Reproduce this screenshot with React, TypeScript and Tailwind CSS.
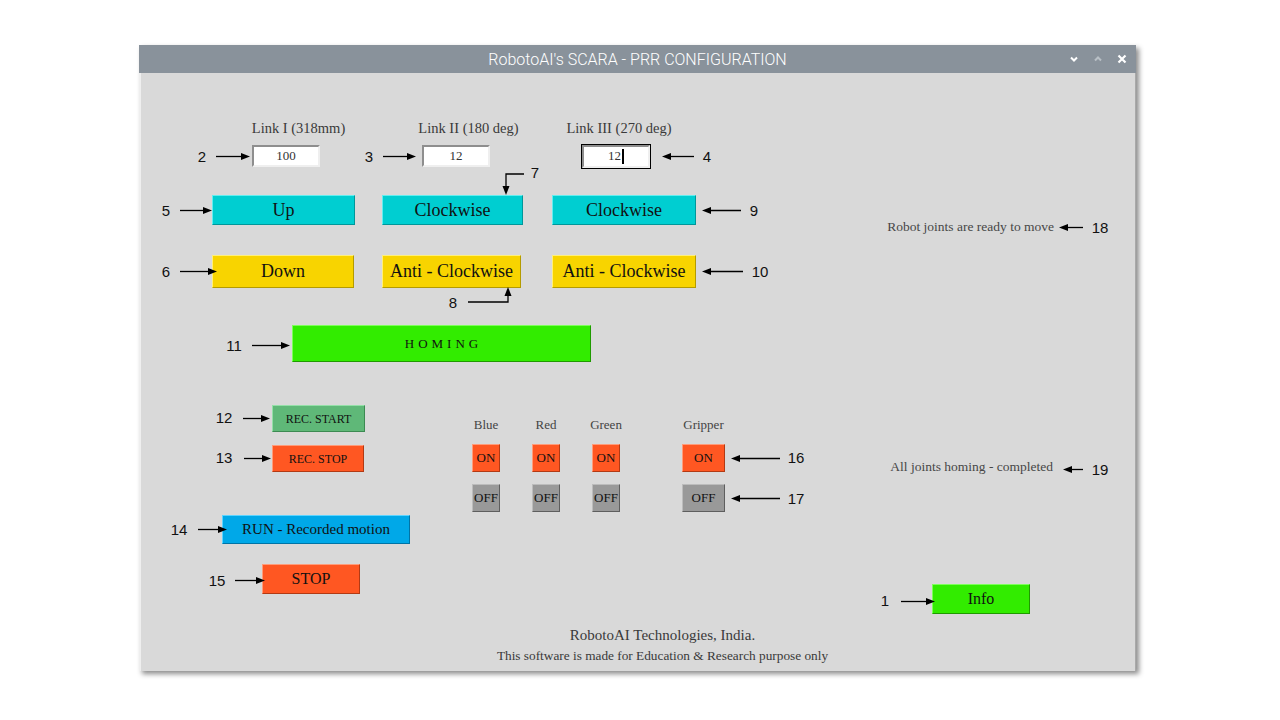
import React from "react";

const serif = "font-['Liberation_Serif','Times_New_Roman',serif]";
const sans = "font-['Liberation_Sans',Arial,sans-serif]";

// Tk style raised buttons
const cyanBtn = `flex items-center justify-center border border-t-[#62eef0] border-l-[#62eef0] border-r-[#00979a] border-b-[#00979a] bg-[#00ced1] text-[18px] text-[#111] ${serif}`;
const yellowBtn = `flex items-center justify-center border border-t-[#fff07a] border-l-[#fff07a] border-r-[#b49b00] border-b-[#b49b00] bg-[#f8d400] text-[18px] text-[#111] ${serif}`;
const greenBtn = `flex items-center justify-center border border-t-[#7dff5a] border-l-[#7dff5a] border-r-[#1f9a00] border-b-[#1f9a00] bg-[#32ec00] text-[#111] ${serif}`;
const orangeBtn = `flex items-center justify-center border border-t-[#ff9c7a] border-l-[#ff9c7a] border-r-[#b23a14] border-b-[#b23a14] bg-[#ff5722] text-[#111] ${serif}`;
const grayBtn = `flex items-center justify-center border border-t-[#bcbcbc] border-l-[#bcbcbc] border-r-[#5e5e5e] border-b-[#5e5e5e] bg-[#999999] text-[#111] ${serif}`;

function Arrow({ w, dir = "right", className = "" }: { w: number; dir?: "right" | "left"; className?: string }) {
  return (
    <svg width={w} height={9} viewBox={`0 0 ${w} 9`} className={`shrink-0 ${className}`}>
      {dir === "right" ? (
        <>
          <line x1={0} y1={4.5} x2={w - 6} y2={4.5} stroke="#000" strokeWidth={1.3} />
          <polygon points={`${w - 9},1 ${w},4.5 ${w - 9},8`} fill="#000" />
        </>
      ) : (
        <>
          <line x1={6} y1={4.5} x2={w} y2={4.5} stroke="#000" strokeWidth={1.3} />
          <polygon points={`9,1 0,4.5 9,8`} fill="#000" />
        </>
      )}
    </svg>
  );
}

function Num({ children, className = "" }: { children: React.ReactNode; className?: string }) {
  return (
    <span className={`flex shrink-0 justify-center whitespace-nowrap text-[15px] leading-none text-[#111] ${sans} ${className}`}>
      {children}
    </span>
  );
}

function TitleBar() {
  return (
    <div className="relative flex h-[28px] items-center justify-center bg-[#89929b]">
      <span className="pt-px font-['Roboto',sans-serif] text-[16px] font-light text-white">RobotoAI's SCARA - PRR CONFIGURATION</span>
      <div className="absolute right-[9px] top-0 flex h-full items-center gap-[14px]">
        <svg width="10" height="10" viewBox="0 0 10 10">
          <path d="M2 3.5 L5 6.5 L8 3.5" stroke="#fff" strokeWidth="2" fill="none" />
        </svg>
        <svg width="10" height="10" viewBox="0 0 10 10">
          <path d="M2 6.5 L5 3.5 L8 6.5" stroke="#b9c0c6" strokeWidth="2" fill="none" />
        </svg>
        <svg width="10" height="10" viewBox="0 0 10 10">
          <path d="M1.5 1.5 L8.5 8.5 M8.5 1.5 L1.5 8.5" stroke="#fff" strokeWidth="2.2" fill="none" />
        </svg>
      </div>
    </div>
  );
}

function LeftPanel() {
  return (
    <div className="flex w-[680px] flex-col">
      {/* link labels */}
      <div className={`mt-[47px] flex h-[17px] items-center text-[14.5px] text-[#3a3a3a] ${serif}`}>
        <span className="ml-[100px] flex w-[119px] justify-center whitespace-nowrap">Link I (318mm)</span>
        <span className="ml-[51px] flex w-[119px] justify-center whitespace-nowrap">Link II (180 deg)</span>
        <span className="ml-[31px] flex w-[120px] justify-center whitespace-nowrap">Link III (270 deg)</span>
      </div>

      {/* entries */}
      <div className={`mt-[8px] flex h-[22px] items-center ${serif}`}>
        <Num className="ml-[53px] w-[20px]">2</Num>
        <Arrow w={34} className="ml-[4px]" />
        <div className="ml-[2px] flex h-[22px] w-[68px] items-center justify-center border-2 border-t-[#8e8e8e] border-l-[#8e8e8e] border-r-[#efefef] border-b-[#efefef] bg-white text-[13px] text-[#333]">
          100
        </div>
        <Num className="ml-[39px] w-[20px]">3</Num>
        <Arrow w={33} className="ml-[4px]" />
        <div className="ml-[6px] flex h-[22px] w-[68px] items-center justify-center border-2 border-t-[#8e8e8e] border-l-[#8e8e8e] border-r-[#efefef] border-b-[#efefef] bg-white text-[13px] text-[#333]">
          12
        </div>
        <div className="ml-[91px] h-[25px] w-[70px] border border-black">
          <div className="flex h-full w-full items-center justify-center border-2 border-t-[#8e8e8e] border-l-[#8e8e8e] border-r-[#efefef] border-b-[#efefef] bg-white text-[13px] text-[#333]">
            <span>12</span>
            <span className="ml-px h-[15px] w-[2px] bg-black" />
          </div>
        </div>
        <Arrow w={32} dir="left" className="ml-[11px]" />
        <Num className="ml-[3px] w-[20px]">4</Num>
      </div>

      {/* up / clockwise */}
      <div className="mt-[28px] flex h-[30px] items-center">
        <Num className="ml-[17px] w-[20px]">5</Num>
        <Arrow w={32} className="ml-[4px]" />
        <button className={`h-[30px] w-[143px] ${cyanBtn}`}>Up</button>
        <button className={`ml-[27px] h-[30px] w-[141px] ${cyanBtn}`}>Clockwise</button>
        <button className={`ml-[29px] h-[30px] w-[144px] ${cyanBtn}`}>Clockwise</button>
        <Arrow w={39} dir="left" className="ml-[6px]" />
        <Num className="ml-[3px] w-[20px]">9</Num>
      </div>

      {/* down / anti-clockwise */}
      <div className="mt-[30px] flex h-[33px] items-center">
        <Num className="ml-[17px] w-[20px]">6</Num>
        <Arrow w={37} className="relative z-10 ml-[4px]" />
        <button className={`ml-[-5px] h-[33px] w-[142px] ${yellowBtn}`}>Down</button>
        <button className={`ml-[28px] h-[33px] w-[139px] ${yellowBtn}`}>Anti - Clockwise</button>
        <button className={`ml-[31px] h-[33px] w-[144px] ${yellowBtn}`}>Anti - Clockwise</button>
        <Arrow w={41} dir="left" className="ml-[6px]" />
        <Num className="ml-[5px] w-[24px]">10</Num>
      </div>

      {/* homing */}
      <div className="mt-[37px] flex h-[37px] items-center">
        <Num className="ml-[83px] w-[24px] pt-[4px]">11</Num>
        <Arrow w={38} className="ml-[6px] mt-[4px]" />
        <button className={`ml-[2px] h-[37px] w-[299px] pl-[4px] text-[13px] tracking-[4px] ${greenBtn}`}>HOMING</button>
      </div>

      {/* recording + toggles */}
      <div className="mt-[43px] flex items-start">
        <div className="flex w-[226px] flex-col">
          <div className="flex h-[27px] items-center">
            <Num className="ml-[73px] w-[24px] pb-[2px]">12</Num>
            <Arrow w={27} className="ml-[7px]" />
            <button className={`ml-[2px] h-[27px] w-[93px] border border-t-[#94e0a8] border-l-[#94e0a8] border-r-[#3c8a52] border-b-[#3c8a52] bg-[#5fb878] text-[12px] text-[#111] ${serif}`}>
              REC. START
            </button>
          </div>
          <div className="mt-[13px] flex h-[27px] items-center">
            <Num className="ml-[73px] w-[24px] pb-[2px]">13</Num>
            <Arrow w={27} className="ml-[8px]" />
            <button className={`ml-[1px] h-[27px] w-[92px] text-[12px] ${orangeBtn}`}>REC. STOP</button>
          </div>
        </div>

        <div className="ml-[107px] flex flex-col">
          <div className={`mt-[13px] flex h-[14px] items-center text-[13px] text-[#444] ${serif}`}>
            <span className="flex w-[28px] justify-center whitespace-nowrap">Blue</span>
            <span className="ml-[32px] flex w-[28px] justify-center whitespace-nowrap">Red</span>
            <span className="ml-[32px] flex w-[28px] justify-center whitespace-nowrap">Green</span>
            <span className="ml-[62px] flex w-[43px] justify-center whitespace-nowrap">Gripper</span>
          </div>
          <div className="mt-[12px] flex h-[28px] items-center">
            <button className={`h-[28px] w-[28px] text-[13px] ${orangeBtn}`}>ON</button>
            <button className={`ml-[32px] h-[28px] w-[28px] text-[13px] ${orangeBtn}`}>ON</button>
            <button className={`ml-[32px] h-[28px] w-[28px] text-[13px] ${orangeBtn}`}>ON</button>
            <button className={`ml-[62px] h-[28px] w-[43px] text-[13px] ${orangeBtn}`}>ON</button>
            <Arrow w={49} dir="left" className="ml-[6px]" />
            <Num className="ml-[4px] w-[24px] pb-[2px]">16</Num>
          </div>
          <div className="mt-[12px] flex h-[28px] items-center">
            <button className={`h-[28px] w-[28px] text-[13px] ${grayBtn}`}>OFF</button>
            <button className={`ml-[32px] h-[28px] w-[28px] text-[13px] ${grayBtn}`}>OFF</button>
            <button className={`ml-[32px] h-[28px] w-[28px] text-[13px] ${grayBtn}`}>OFF</button>
            <button className={`ml-[62px] h-[28px] w-[43px] text-[13px] ${grayBtn}`}>OFF</button>
            <Arrow w={49} dir="left" className="ml-[6px]" />
            <Num className="ml-[4px] w-[24px]">17</Num>
          </div>
        </div>
      </div>

      {/* run recorded */}
      <div className="mt-[3px] flex h-[29px] items-center">
        <Num className="ml-[28px] w-[24px]">14</Num>
        <Arrow w={29} className="relative z-10 ml-[7px]" />
        <button className={`ml-[-5px] h-[29px] w-[188px] border border-t-[#5cd4ff] border-l-[#5cd4ff] border-r-[#0074a6] border-b-[#0074a6] bg-[#00a8e8] text-[15px] text-[#111] ${serif}`}>
          RUN - Recorded motion
        </button>
      </div>

      {/* stop */}
      <div className="mt-[20px] flex h-[30px] items-center">
        <Num className="ml-[66px] w-[24px] pt-[2px]">15</Num>
        <Arrow w={30} className="relative z-10 ml-[6px] mt-[2px]" />
        <button className={`ml-[-3px] h-[30px] w-[98px] text-[16px] ${orangeBtn}`}>STOP</button>
      </div>
    </div>
  );
}

function RightPanel() {
  return (
    <div className="flex flex-1 flex-col">
      <div className={`mt-[146px] flex h-[16px] items-center justify-end pr-[26px]`}>
        <span className={`whitespace-nowrap text-[13.5px] text-[#474747] ${serif}`}>Robot joints are ready to move</span>
        <Arrow w={24} dir="left" className="ml-[5px]" />
        <Num className="ml-[7px] w-[20px]">18</Num>
      </div>
      <div className={`mt-[224px] flex h-[16px] items-center justify-end pr-[26px]`}>
        <span className={`whitespace-nowrap text-[13.5px] text-[#474747] ${serif}`}>All joints homing - completed</span>
        <Arrow w={20} dir="left" className="ml-[10px] mt-[4px]" />
        <Num className="ml-[7px] w-[20px] pt-[5px]">19</Num>
      </div>
      <div className="mt-[109px] flex h-[30px] items-center">
        <Num className="ml-[56px] w-[20px] pt-[3px]">1</Num>
        <Arrow w={34} className="relative z-10 ml-[6px] mt-[4px]" />
        <button className={`ml-[-3px] h-[30px] w-[98px] text-[16px] ${greenBtn}`}>Info</button>
      </div>
    </div>
  );
}

export default function App() {
  return (
    <div className="min-h-screen bg-white pl-[139px] pt-[45px]">
      <div className="flex h-[626px] w-[997px] flex-col shadow-[3px_3px_5px_rgba(0,0,0,0.45)]">
        <TitleBar />
        <div className="relative flex flex-1 flex-col bg-[#d9d9d9] shadow-[inset_2px_0_0_#efefef,inset_-1px_0_0_#a9a9a9]">
          <div className="flex h-[553px]">
            <LeftPanel />
            <RightPanel />
          </div>

          <div className={`flex flex-col items-center pl-[50px] text-[#3a3a3a] ${serif}`}>
            <span className="h-[18px] text-[15px] leading-[18px]">RobotoAI Technologies, India.</span>
            <span className="mt-[4px] h-[16px] text-[13.3px] leading-[16px]">
              This software is made for Education &amp; Research purpose only
            </span>
          </div>

          {/* bent callouts 7 and 8 lie over the buttons */}
          <svg width="997" height="598" className="pointer-events-none absolute left-0 top-0">
            <path d="M385 101 H367 V114" stroke="#000" strokeWidth="1.3" fill="none" />
            <polygon points="363.5,113 370.5,113 367,122" fill="#000" />
            <path d="M369 222 V229 H329" stroke="#000" strokeWidth="1.3" fill="none" />
            <polygon points="365.5,223 372.5,223 369,214" fill="#000" />
          </svg>
          <span className={`absolute left-[390px] top-[92px] w-[12px] text-center text-[15px] leading-[16px] text-[#111] ${sans}`}>7</span>
          <span className={`absolute left-[308px] top-[222px] w-[12px] text-center text-[15px] leading-[16px] text-[#111] ${sans}`}>8</span>
        </div>
      </div>
    </div>
  );
}
